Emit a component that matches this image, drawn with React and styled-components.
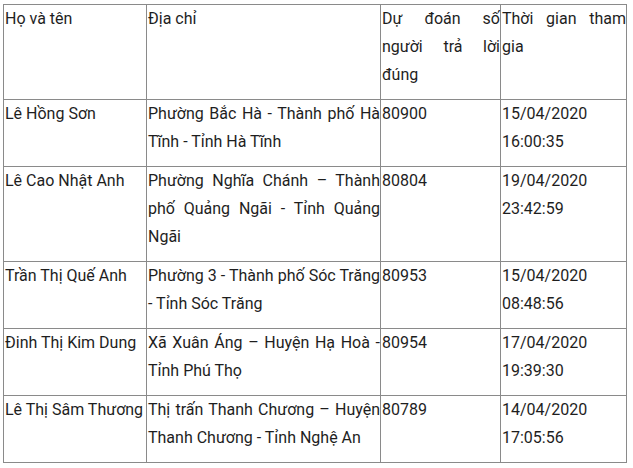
import React from "react";
import styled, { createGlobalStyle } from "styled-components";

const GlobalStyle = createGlobalStyle`
	html, body {
		margin: 0;
		padding: 0;
		background-color: #FFFFFF;
	}
`;

const Page = styled.div`
	padding: 4px 0 0 3px;
	font-family: Roboto, "Liberation Sans", sans-serif;
	font-size: 16px;
	color: #1E1E1E;
`;

const Table = styled.table`
	width: 623px;
	table-layout: fixed;
	border-collapse: collapse;
	border: 1px solid #222222;
`;

const Col = styled.col`
	width: ${(props) => props.$width}px;
`;

const Cell = styled.td`
	padding: 0 0 10px 1px;

	vertical-align: top;
	text-align: justify;

	border: 1px solid #8A8A8A;

	font-size: 16px;
	line-height: 28px;
	font-weight: 400;
	color: #1E1E1E;
`;

const columns = [143, 234, 120, 126];

const header = ["Họ và tên", "Địa chỉ", "Dự đoán số người trả lời đúng", "Thời gian tham gia"];

const rows = [
	["Lê Hồng Sơn", "Phường Bắc Hà - Thành phố Hà Tĩnh - Tỉnh Hà Tĩnh", "80900", "15/04/2020 16:00:35"],
	["Lê Cao Nhật Anh", "Phường Nghĩa Chánh – Thành phố Quảng Ngãi - Tỉnh Quảng Ngãi", "80804", "19/04/2020 23:42:59"],
	["Trần Thị Quế Anh", "Phường 3 - Thành phố Sóc Trăng - Tỉnh Sóc Trăng", "80953", "15/04/2020 08:48:56"],
	["Đinh Thị Kim Dung", "Xã Xuân Áng – Huyện Hạ Hoà - Tỉnh Phú Thọ", "80954", "17/04/2020 19:39:30"],
	["Lê Thị Sâm Thương", "Thị trấn Thanh Chương – Huyện Thanh Chương - Tỉnh Nghệ An", "80789", "14/04/2020 17:05:56"],
];

export default function App() {
	return (
		<Page>
			<GlobalStyle />
			<Table>
				<colgroup>
					{columns.map((w, i) => (
						<Col key={i} $width={w} />
					))}
				</colgroup>
				<tbody>
					{[header, ...rows].map((row) => (
						<tr key={row[0]}>
							{row.map((text, i) => (
								<Cell key={i}>{text}</Cell>
							))}
						</tr>
					))}
				</tbody>
			</Table>
		</Page>
	);
}
